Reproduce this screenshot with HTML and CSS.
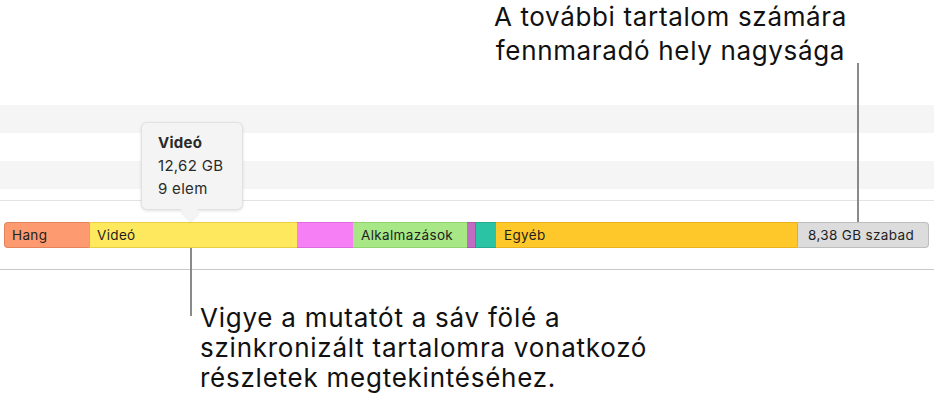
FILE: index.html
```html
<!DOCTYPE html>
<html lang="hu">
<head>
<meta charset="utf-8">
<link rel="stylesheet" href="styles.css">
</head>
<body>
<div class="page">
  <div class="top">
    <p class="headline">A további tartalom számára<br>fennmaradó hely nagysága</p>
  </div>
  <div class="rows">
    <div class="row gray"></div>
    <div class="row"></div>
    <div class="row gray"></div>
    <div class="row short"></div>
  </div>
  <div class="bar-area">
    <div class="bar">
      <div class="seg hang" style="width:85px">Hang</div>
      <div class="seg video" style="width:208px">Videó</div>
      <div class="seg pink" style="width:56px"></div>
      <div class="seg apps" style="width:114px">Alkalmazások</div>
      <div class="seg purple" style="width:7px"></div>
      <div class="seg teal" style="width:20px"></div>
      <div class="seg other" style="width:301px">Egyéb</div>
      <div class="seg free" style="width:132px">8,38 GB szabad</div>
    </div>
  </div>
  <div class="bottom">
    <p class="caption">Vigye a mutatót a sáv fölé a<br>szinkronizált tartalomra vonatkozó<br>részletek megtekintéséhez.</p>
  </div>

  <div class="tooltip">
    <div class="tip-title">Videó</div>
    <div>12,62 GB</div>
    <div>9 elem</div>
    <span class="tip-arrow"></span>
  </div>
  <div class="callout callout-right"></div>
  <div class="callout callout-left"></div>
</div>
</body>
</html>
```
FILE: styles.css
```css
html, body {
  margin: 0;
  padding: 0;
  background: #fff;
}
body {
  font-family: Inter, "Liberation Sans", Arial, sans-serif;
  color: #111;
}
.page {
  position: relative;
  width: 934px;
  height: 407px;
  overflow: hidden;
}
.top {
  height: 105px;
  display: flex;
  justify-content: flex-end;
  padding-right: 87px;
}
.headline {
  margin: 0;
  font-size: 26px;
  line-height: 34px;
  letter-spacing: 0.65px;
  text-align: center;
  color: #111;
}
.rows {
  display: flex;
  flex-direction: column;
  border-bottom: 1px solid #e3e3e3;
}
.row {
  height: 28px;
}
.row.gray {
  background: #f5f5f5;
}
.row.short {
  height: 11px;
}
.bar-area {
  padding: 21px 0 21px 4px;
  border-bottom: 1px solid #c8c8c8;
  width: 931px;
}
.bar {
  display: flex;
  height: 26px;
}
.seg {
  box-sizing: border-box;
  height: 26px;
  font-size: 13.5px;
  letter-spacing: 0.35px;
  line-height: 24px;
  padding-left: 8px;
  color: #1e1e1e;
  border-top: 1px solid;
  border-bottom: 1px solid;
  white-space: nowrap;
}
.hang {
  background: #fd9a70;
  border-color: #e4845c;
  border-left: 1px solid #e4845c;
  border-radius: 4px 0 0 4px;
  padding-left: 7px;
}
.video {
  background: #fde85e;
  border-color: #e6cf45;
  border-left: 1px solid #e0a060;
  padding-left: 7px;
}
.pink {
  background: #f77ff6;
  border-color: #dd6ddd;
}
.apps {
  background: #a7e786;
  border-color: #8fd46f;
}
.purple {
  background: #c26bc2;
  border-color: #aa58aa;
  border-right: 1px solid #9a5aa0;
}
.teal {
  background: #2ac4a4;
  border-color: #22aa8e;
}
.other {
  background: #fec82b;
  border-color: #e9b21c;
}
.free {
  background: #dcdcdc;
  border-color: #bdbdbd;
  border-left: 1px solid #e0ad30;
  border-right: 1px solid #bdbdbd;
  border-radius: 0 4px 4px 0;
  padding-left: 10px;
}
.bottom {
  padding: 33px 0 0 200px;
}
.caption {
  margin: 0;
  font-size: 26px;
  line-height: 30px;
  letter-spacing: 0.75px;
  color: #111;
}
.tooltip {
  position: absolute;
  left: 141px;
  top: 122px;
  width: 102px;
  height: 88px;
  box-sizing: border-box;
  padding: 8px 0 0 16px;
  background: #f4f4f4;
  border: 1px solid #e2e2e2;
  border-radius: 6px;
  box-shadow: 0 1px 3px rgba(0,0,0,0.12);
  font-size: 15px;
  letter-spacing: 0.3px;
  line-height: 23px;
  color: #2a2a2a;
}
.tip-title {
  font-weight: bold;
}
.tip-arrow {
  position: absolute;
  left: 41px;
  bottom: -9px;
  width: 14px;
  height: 14px;
  background: #f4f4f4;
  transform: rotate(45deg) scaleY(0.9);
  box-shadow: 2px 2px 2px rgba(0,0,0,0.06);
}
.callout {
  position: absolute;
  width: 2px;
  background: #8a8a8a;
}
.callout-right {
  left: 857px;
  top: 63px;
  height: 159px;
}
.callout-left {
  left: 190px;
  top: 248px;
  height: 68px;
}
```
